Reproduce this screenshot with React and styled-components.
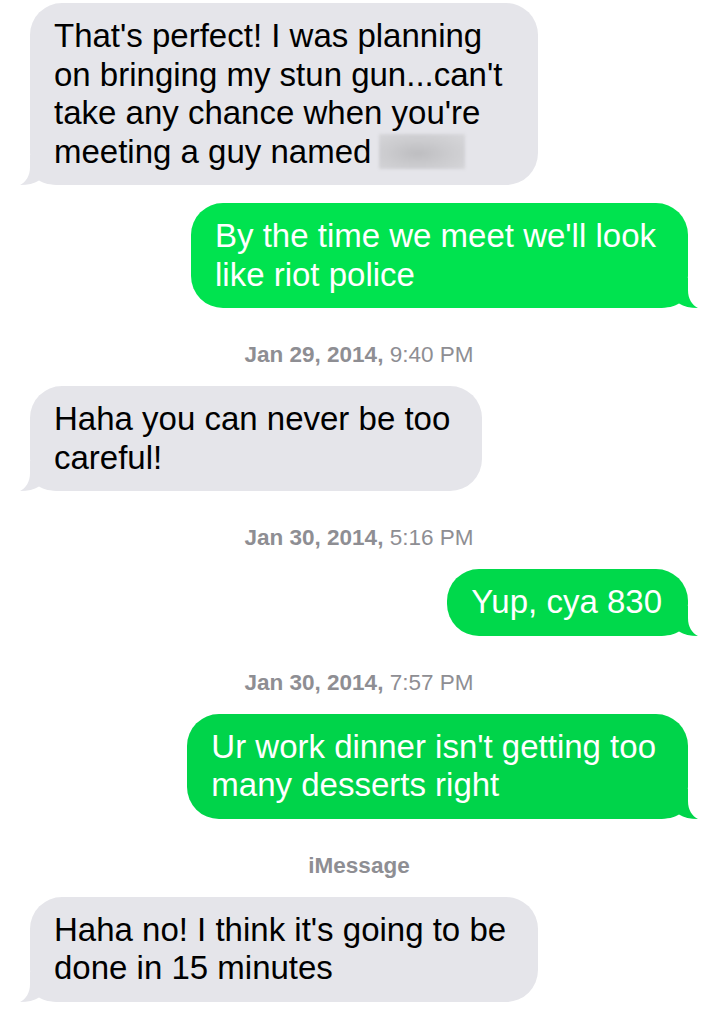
import React from 'react';
import styled, { createGlobalStyle } from 'styled-components';

// bubble colours
const gray = '#e5e5ea';

const thread = [
  {
    type: 'in',
    lines: ["That's perfect! I was planning", "on bringing my stun gun...can't", "take any chance when you're", 'meeting a guy named'],
    hidden: true,
  },
  { type: 'out', tone: '#00e34f', lines: ["By the time we meet we'll look", 'like riot police'] },
  { type: 'stamp', date: 'Jan 29, 2014,', time: '9:40 PM' },
  { type: 'in', lines: ['Haha you can never be too', 'careful!'] },
  { type: 'stamp', date: 'Jan 30, 2014,', time: '5:16 PM' },
  { type: 'out', tone: '#00d94b', lines: ['Yup, cya 830'] },
  { type: 'stamp', date: 'Jan 30, 2014,', time: '7:57 PM' },
  { type: 'out', tone: '#00d44a', lines: ["Ur work dinner isn't getting too", 'many desserts right'] },
  { type: 'label', text: 'iMessage' },
  { type: 'in', lines: ["Haha no! I think it's going to be", 'done in 15 minutes'] },
];

const Tail = ({ fill, side }) => (
  <TailSvg side={side} width="44" height="30" viewBox="0 0 44 30">
    <path
      d="M10 0 L10 12 C10 21 6 27 0 30 C8 30 14 28.5 19 25.5 C24 28.5 30 30 40 30 L44 30 L44 0 Z"
      fill={fill}
    />
  </TailSvg>
);

const App = () => {
  let prev = null;
  return (
    <>
      <GlobalStyle />
      <Thread>
        {thread.map((item, i) => {
          const after = prev;
          prev = item.type;
          if (item.type === 'stamp') {
            return (
              <Stamp key={i}>
                <b>{item.date}</b> {item.time}
              </Stamp>
            );
          }
          if (item.type === 'label') {
            return (
              <Stamp key={i}>
                <b>{item.text}</b>
              </Stamp>
            );
          }
          const out = item.type === 'out';
          const fill = out ? item.tone : gray;
          const multi = item.lines.length > 1;
          return (
            <Row key={i} out={out} spaced={after === 'in' || after === 'out'}>
              <Bubble out={out} tone={fill} multi={multi}>
                <Tail fill={fill} side={out ? 'right' : 'left'} />
                {item.lines.map((line, j) => (
                  <Line key={j}>
                    {line}
                    {item.hidden && j === item.lines.length - 1 && <Blurred />}
                  </Line>
                ))}
              </Bubble>
            </Row>
          );
        })}
      </Thread>
    </>
  );
};

export default App;

const GlobalStyle = createGlobalStyle`
  body {
    margin: 0;
    background: #ffffff;
    font-family: "Liberation Sans", Arial, sans-serif;
    -webkit-font-smoothing: antialiased;
  }
`;

const Thread = styled.div`
  display: flex;
  flex-direction: column;
  padding: 3px 31px 0 30px;
`;

const Row = styled.div`
  display: flex;
  justify-content: ${(p) => (p.out ? 'flex-end' : 'flex-start')};
  margin-top: ${(p) => (p.spaced ? '18px' : '0')};
`;

const Bubble = styled.div`
  position: relative;
  max-width: 508px;
  box-sizing: border-box;
  padding: ${(p) => (p.multi ? '14px 32px 14px 24px' : '14px 26px 14px 24px')};
  border-radius: 32px;
  background: ${(p) => p.tone};
  color: ${(p) => (p.out ? '#ffffff' : '#000000')};
  font-size: 33px;
  line-height: 38.5px;
`;

const Line = styled.div`
  position: relative;
  white-space: nowrap;
`;

const Blurred = styled.span`
  display: inline-block;
  width: 86px;
  height: 35px;
  margin-left: 8px;
  margin-right: 44px;
  vertical-align: -6px;
  background: radial-gradient(ellipse at 45% 55%, #bdbdc0 0%, #cbcbce 45%, #d8d8db 100%);
  filter: blur(1.5px);
`;

const TailSvg = styled.svg`
  position: absolute;
  bottom: 0;
  ${(p) => (p.side === 'right' ? 'right: -10px; transform: scaleX(-1);' : 'left: -10px;')}
`;

const Stamp = styled.div`
  padding: 34px 0 18px;
  text-align: center;
  font-size: 22.5px;
  line-height: 26px;
  color: #8e8e93;

  b {
    font-weight: 700;
  }
`;
